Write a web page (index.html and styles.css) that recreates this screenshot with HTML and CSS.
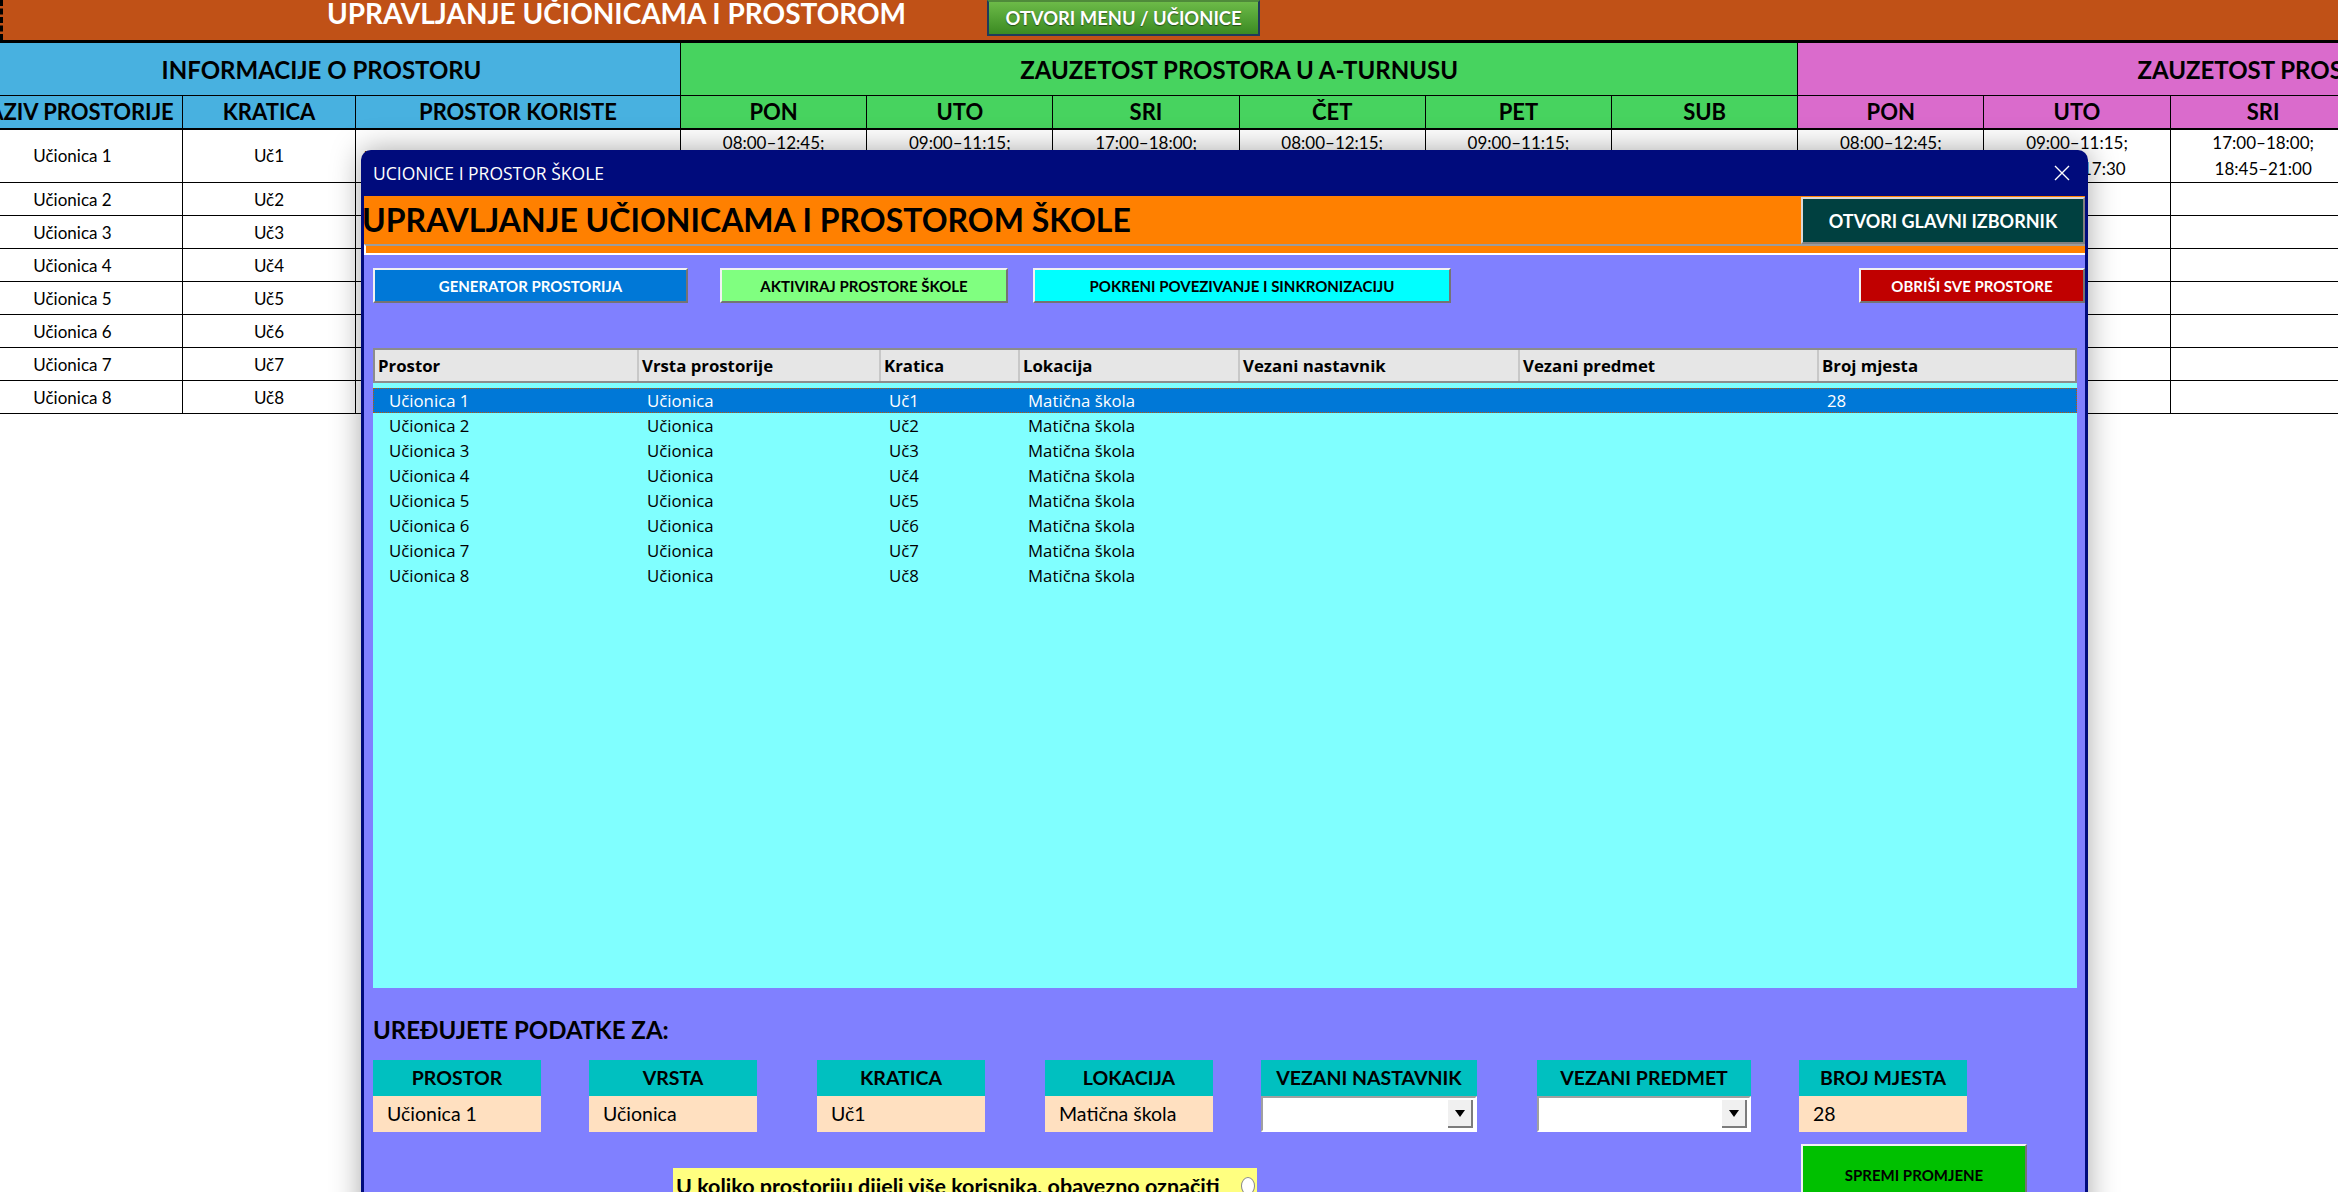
FILE: index.html
```html
<!DOCTYPE html>
<html lang="hr">
<head>
  <meta charset="UTF-8">
  <title>Upravljanje učionicama i prostorom</title>
  <link rel="stylesheet" href="styles.css">
</head>
<body>
  <div class="sheet">
    <div class="sheet-top">
      <span class="pane-mark"></span>
      <h1 class="sheet-title">UPRAVLJANJE UČIONICAMA I PROSTOROM</h1>
      <button class="menu-btn">OTVORI MENU / UČIONICE</button>
    </div>

    <table class="grid">
      <colgroup>
        <col style="width:220px"><col style="width:173px"><col style="width:325px">
        <col class="day"><col class="day"><col class="day"><col class="day"><col class="day"><col class="day">
        <col class="day"><col class="day"><col class="day"><col class="day"><col class="day"><col class="day">
      </colgroup>
      <tr class="band">
        <th colspan="3" class="info">INFORMACIJE O PROSTORU</th>
        <th colspan="6" class="turn-a">ZAUZETOST PROSTORA U A-TURNUSU</th>
        <th colspan="6" class="turn-b">ZAUZETOST PROSTORA U B-TURNUSU</th>
      </tr>
      <tr class="heads">
        <th class="info">NAZIV PROSTORIJE</th>
        <th class="info">KRATICA</th>
        <th class="info">PROSTOR KORISTE</th>
        <th class="turn-a">PON</th><th class="turn-a">UTO</th><th class="turn-a">SRI</th>
        <th class="turn-a">ČET</th><th class="turn-a">PET</th><th class="turn-a">SUB</th>
        <th class="turn-b">PON</th><th class="turn-b">UTO</th><th class="turn-b">SRI</th>
        <th class="turn-b">ČET</th><th class="turn-b">PET</th><th class="turn-b">SUB</th>
      </tr>
      <tr class="tall">
        <td>Učionica 1</td><td>Uč1</td>
        <td class="users">Ukupno: Filip Ivanković, Matematika, Hrvatski jezik</td>
        <td>08:00–12:45;<br>14:00–15:30</td><td>09:00–11:15;<br>16:00–17:30</td><td>17:00–18:00;<br>18:45–21:00</td>
        <td>08:00–12:15;<br>13:00–14:30</td><td>09:00–11:15;<br>12:00–13:30</td><td></td>
        <td>08:00–12:45;<br>14:00–15:30</td><td>09:00–11:15;<br>16:00–17:30</td><td>17:00–18:00;<br>18:45–21:00</td>
        <td></td><td></td><td></td>
      </tr>
      <tr><td>Učionica 2</td><td>Uč2</td><td></td><td></td><td></td><td></td><td></td><td></td><td></td><td></td><td></td><td></td><td></td><td></td><td></td></tr>
      <tr><td>Učionica 3</td><td>Uč3</td><td></td><td></td><td></td><td></td><td></td><td></td><td></td><td></td><td></td><td></td><td></td><td></td><td></td></tr>
      <tr><td>Učionica 4</td><td>Uč4</td><td></td><td></td><td></td><td></td><td></td><td></td><td></td><td></td><td></td><td></td><td></td><td></td><td></td></tr>
      <tr><td>Učionica 5</td><td>Uč5</td><td></td><td></td><td></td><td></td><td></td><td></td><td></td><td></td><td></td><td></td><td></td><td></td><td></td></tr>
      <tr><td>Učionica 6</td><td>Uč6</td><td></td><td></td><td></td><td></td><td></td><td></td><td></td><td></td><td></td><td></td><td></td><td></td><td></td></tr>
      <tr><td>Učionica 7</td><td>Uč7</td><td></td><td></td><td></td><td></td><td></td><td></td><td></td><td></td><td></td><td></td><td></td><td></td><td></td></tr>
      <tr><td>Učionica 8</td><td>Uč8</td><td></td><td></td><td></td><td></td><td></td><td></td><td></td><td></td><td></td><td></td><td></td><td></td><td></td></tr>
    </table>
  </div>

  <!-- forma za uređivanje prostora -->
  <div class="form">
    <div class="form-caption">
      <span>UCIONICE I PROSTOR ŠKOLE</span>
      <svg class="close" width="16" height="16" viewBox="0 0 16 16">
        <path d="M1 1 L15 15 M15 1 L1 15" stroke="#fff" stroke-width="1.4" fill="none"/>
      </svg>
    </div>

    <div class="form-head">
      <h2>UPRAVLJANJE UČIONICAMA I PROSTOROM ŠKOLE</h2>
      <button class="btn btn-main">OTVORI GLAVNI IZBORNIK</button>
    </div>
    <div class="form-strip"></div>

    <div class="form-body">
      <div class="actions">
        <button class="btn btn-gen">GENERATOR PROSTORIJA</button>
        <button class="btn btn-act">AKTIVIRAJ PROSTORE ŠKOLE</button>
        <button class="btn btn-sync">POKRENI POVEZIVANJE I SINKRONIZACIJU</button>
        <button class="btn btn-del">OBRIŠI SVE PROSTORE</button>
      </div>

      <div class="list">
        <div class="list-head">
          <span>Prostor</span><span>Vrsta prostorije</span><span>Kratica</span><span>Lokacija</span>
          <span>Vezani nastavnik</span><span>Vezani predmet</span><span>Broj mjesta</span>
        </div>
        <div class="list-body">
          <div class="row sel"><span>Učionica 1</span><span>Učionica</span><span>Uč1</span><span>Matična škola</span><span></span><span></span><span>28</span></div>
          <div class="row"><span>Učionica 2</span><span>Učionica</span><span>Uč2</span><span>Matična škola</span><span></span><span></span><span></span></div>
          <div class="row"><span>Učionica 3</span><span>Učionica</span><span>Uč3</span><span>Matična škola</span><span></span><span></span><span></span></div>
          <div class="row"><span>Učionica 4</span><span>Učionica</span><span>Uč4</span><span>Matična škola</span><span></span><span></span><span></span></div>
          <div class="row"><span>Učionica 5</span><span>Učionica</span><span>Uč5</span><span>Matična škola</span><span></span><span></span><span></span></div>
          <div class="row"><span>Učionica 6</span><span>Učionica</span><span>Uč6</span><span>Matična škola</span><span></span><span></span><span></span></div>
          <div class="row"><span>Učionica 7</span><span>Učionica</span><span>Uč7</span><span>Matična škola</span><span></span><span></span><span></span></div>
          <div class="row"><span>Učionica 8</span><span>Učionica</span><span>Uč8</span><span>Matična škola</span><span></span><span></span><span></span></div>
        </div>
      </div>

      <h3 class="edit-title">UREĐUJETE PODATKE ZA:</h3>

      <div class="fields">
        <div class="field"><div class="field-label">PROSTOR</div><div class="field-value">Učionica 1</div></div>
        <div class="field"><div class="field-label">VRSTA</div><div class="field-value">Učionica</div></div>
        <div class="field field-spaced"><div class="field-label">KRATICA</div><div class="field-value">Uč1</div></div>
        <div class="field field-spaced"><div class="field-label">LOKACIJA</div><div class="field-value">Matična škola</div></div>
        <div class="field field-teacher">
          <div class="field-label">VEZANI NASTAVNIK</div>
          <div class="combo"><span class="combo-arrow"></span></div>
        </div>
        <div class="field field-subject field-spaced">
          <div class="field-label">VEZANI PREDMET</div>
          <div class="combo"><span class="combo-arrow"></span></div>
        </div>
        <div class="field"><div class="field-label">BROJ MJESTA</div><div class="field-value">28</div></div>
      </div>

      <div class="form-foot">
        <label class="shared-note">U koliko prostoriju dijeli više korisnika, obavezno označiti <span class="radio"></span></label>
        <button class="btn btn-save">SPREMI PROMJENE</button>
      </div>
    </div>
  </div>
</body>
</html>
```

FILE: styles.css
```css
* {
  box-sizing: border-box;
}

body {
  margin: 0;
  width: 2338px;
  height: 1192px;
  overflow: hidden;
  position: relative;
  background: #fff;
  font-family: Lato, 'Liberation Sans', sans-serif;
  color: #000;
}

button {
  font-family: Lato, 'Liberation Sans', sans-serif;
  cursor: pointer;
  padding: 0;
}

/* --- tablica --- */

.sheet-top {
  height: 42px;
  background: #c05117;
  border-bottom: 2px solid #000;
  display: flex;
  align-items: flex-start;
}

.pane-mark {
  width: 3px;
  height: 40px;
  border-left: 3px dashed #000;
  margin-right: 320px;
}

.sheet-title {
  margin: 0;
  width: 587px;
  text-align: center;
  color: #fff;
  font-size: 28px;
  font-weight: 700;
  line-height: 26px;
}

.menu-btn {
  margin-left: 77px;
  width: 273px;
  height: 36px;
  background: linear-gradient(#6cba48, #3b8a22);
  border: 2px solid #1f3a5a;
  border-top-color: #4f8a3a;
  color: #fff;
  font-size: 18.4px;
  font-weight: 700;
  text-shadow: 0 1px 1px rgba(0,0,0,0.5);
}

.grid {
  border-collapse: collapse;
  table-layout: fixed;
  width: 2915px;
  margin-left: -38px;
}

.grid col.day {
  width: 186.2px;
}

.grid th, .grid td {
  border: 1px solid #000;
  padding: 0;
  text-align: center;
  white-space: nowrap;
  overflow: hidden;
}

.grid th {
  font-size: 22px;
  font-weight: 700;
}

.band th {
  height: 53px;
  font-size: 24px;
}

.heads th {
  height: 33px;
  border-bottom: 2px solid #000;
}

.info { background: #48b1e0; }
.turn-a { background: #47d35f; }
.turn-b { background: #da6bcc; }

.grid td {
  height: 33px;
  font-size: 17px;
}

.grid tr.tall td {
  height: 54px;
  line-height: 26px;
}

.grid td.users {
  font-size: 14px;
  text-align: left;
  padding-left: 8px;
}

/* --- forma --- */

.form {
  position: absolute;
  left: 361px;
  top: 150px;
  width: 1727px;
  height: 1100px;
  background: #000b7c;
  border-radius: 10px 10px 0 0;
  padding: 0 3px;
  box-shadow: 0 0 30px rgba(0,0,0,0.35);
}

.form-caption {
  height: 46px;
  display: flex;
  align-items: center;
  justify-content: space-between;
  padding: 0 15px 0 9px;
  color: #fff;
  font-family: 'Open Sans', 'Noto Sans', sans-serif;
  font-size: 17.5px;
}

.form-head {
  height: 48px;
  background: #ff8000;
  display: flex;
  justify-content: space-between;
  align-items: flex-start;
}

.form-head h2 {
  margin: 0 0 0 -2px;
  font-size: 32px;
  font-weight: 700;
  line-height: 48px;
}

.btn {
  border: 2px solid;
  border-color: #f2f2f2 #747474 #747474 #f2f2f2;
  font-size: 15px;
  font-weight: 700;
}

.btn-main {
  margin-top: 1px;
  width: 284px;
  height: 47px;
  background: #004040;
  color: #fff;
  font-size: 18px;
  border-color: #d8d8d8 #808080 #808080 #d8d8d8;
}

.form-strip {
  height: 11px;
  background: #ff8000;
  border-top: 2px solid #9c9c9c;
  border-bottom: 2px solid #fff;
  border-left: 2px solid #fff;
}

.form-body {
  height: 1000px;
  background: #8080ff;
  padding: 13px 0 0 9px;
}

.actions {
  display: flex;
  height: 35px;
}

.btn-gen { width: 315px; background: #0078d7; color: #fff; }
.btn-act { width: 288px; margin-left: 32px; background: #80ff80; }
.btn-sync { width: 418px; margin-left: 25px; background: #00ffff; }
.btn-del { width: 226px; margin-left: auto; background: #c00000; color: #fff; }

.list {
  margin: 45px 8px 0 0;
  font-family: 'Open Sans', 'Noto Sans', sans-serif;
}

.list-head, .row {
  display: grid;
  grid-template-columns: 262px 242px 139px 220px 280px 299px 1fr;
}

.list-head {
  height: 35px;
  background: #e6e6e6;
  border: 2px solid #8c8c8c;
  font-size: 16.8px;
  font-weight: 700;
  line-height: 31px;
}

.list-head span {
  padding-left: 3px;
  border-left: 2px solid #c8c8c8;
}

.list-head span:first-child {
  border-left: none;
  padding-left: 3px;
}

.list-body {
  height: 605px;
  background: #80ffff;
  padding-top: 5px;
}

.row {
  height: 25px;
  line-height: 25px;
  font-size: 16.8px;
}

.row span {
  padding-left: 12px;
}

.row span:first-child {
  padding-left: 16px;
}

.row.sel {
  background: #0078d7;
  color: #fff;
  outline: 1px dotted #c05a00;
  outline-offset: -1px;
}

.edit-title {
  margin: 27px 0 0;
  font-size: 24px;
  font-weight: 700;
  line-height: 30px;
}

.fields {
  display: flex;
  gap: 48px;
  margin-top: 15px;
}

.field {
  width: 168px;
}

.field-spaced { margin-left: 12px; }
.field-teacher { width: 216px; }
.field-subject { width: 214px; }

.field-label {
  height: 36px;
  background: #00c0c0;
  text-align: center;
  font-size: 19.5px;
  font-weight: 700;
  line-height: 36px;
}

.field-value {
  height: 36px;
  background: #ffe0c0;
  padding-left: 14px;
  font-size: 19.5px;
  line-height: 36px;
}

.combo {
  height: 36px;
  background: #fff;
  border: 2px solid;
  border-color: #a0a0a0 #fff #fff #a0a0a0;
  padding: 2px;
  display: flex;
  justify-content: flex-end;
}

.combo-arrow {
  width: 25px;
  background: #f0f0f0;
  border-right: 2px solid #7c7c7c;
  border-bottom: 2px solid #7c7c7c;
  display: flex;
  align-items: center;
  justify-content: center;
}

.combo-arrow::after {
  content: '';
  border-left: 5px solid transparent;
  border-right: 5px solid transparent;
  border-top: 7px solid #000;
}

.form-foot {
  display: flex;
  align-items: flex-start;
  margin-top: 12px;
}

.shared-note {
  display: flex;
  align-items: flex-start;
  margin: 24px 0 0 300px;
  width: 584px;
  height: 40px;
  padding: 6px 0 0 3px;
  background: #ffff80;
  font-size: 21.5px;
  font-weight: 700;
  line-height: 24px;
  white-space: nowrap;
}

.radio {
  margin: 3px 2px 0 auto;
  width: 14px;
  height: 18px;
  border-radius: 50%;
  background: #fff;
  border: 1px solid #888;
}

.btn-save {
  margin-left: 544px;
  width: 226px;
  height: 62px;
  background: #00c000;
}
```
